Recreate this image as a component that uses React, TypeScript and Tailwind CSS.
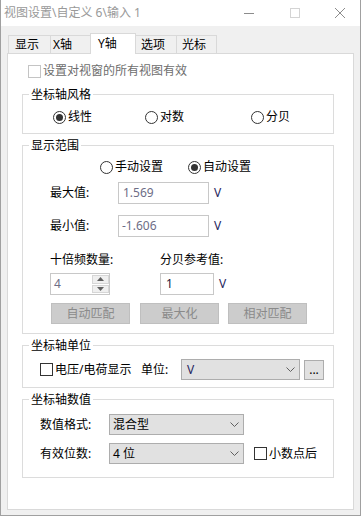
import React from "react";

const tabs = [
  { label: "显示", cls: "w-[42px] pl-[6px] border-l" },
  { label: "X轴", cls: "w-[40px] pl-[2px] border-l" },
  { label: "Y轴", cls: "w-[46px] pl-[7px] border-x", active: true },
  { label: "选项", cls: "w-[40px] pl-[5px]" },
  { label: "光标", cls: "w-[41px] pl-[5px] border-x" },
];

function Radio({ label, checked }: { label: string; checked?: boolean }) {
  return (
    <div className="flex items-center">
      <span className="flex h-[13px] w-[13px] items-center justify-center rounded-full border border-[#333333] bg-white">
        {checked && <span className="h-[7px] w-[7px] rounded-full bg-[#333333]" />}
      </span>
      <span className="ml-[2px] leading-[14px]">{label}</span>
    </div>
  );
}

function Checkbox({ label, disabled }: { label: string; disabled?: boolean }) {
  return (
    <div className="flex items-center">
      <span
        className={
          disabled
            ? "h-[13px] w-[13px] border border-[#c4c4c4] bg-white"
            : "h-[13px] w-[13px] border border-[#333333] bg-white"
        }
      />
      <span className={disabled ? "ml-[2px] leading-[14px] text-[#6d6d6d]" : "ml-[2px] leading-[14px]"}>
        {label}
      </span>
    </div>
  );
}

function GroupBox({ title, className, children }: { title: string; className?: string; children: React.ReactNode }) {
  return (
    <fieldset className={"ml-[14px] w-[312px] border border-[#dcdcdc] " + (className ?? "")}>
      <legend className="ml-[6px] px-[2px] leading-[13px]">{title}</legend>
      {children}
    </fieldset>
  );
}

function Chevron() {
  return (
    <svg width="9" height="5" viewBox="0 0 9 5" className="shrink-0">
      <path d="M0.5 0.5 L4.5 4.5 L8.5 0.5" fill="none" stroke="#606060" strokeWidth="1" />
    </svg>
  );
}

function Select({ value, className, valueClass }: { value: string; className: string; valueClass?: string }) {
  return (
    <div
      className={
        "flex h-[21px] items-center justify-between border border-[#adadad] bg-[#e1e1e1] pl-[3px] pr-[4px] " +
        className
      }
    >
      <span className={"leading-[14px] " + (valueClass ?? "")}>{value}</span>
      <Chevron />
    </div>
  );
}

function Button({ label, className }: { label: string; className?: string }) {
  return (
    <div
      className={
        "flex h-[21px] w-[79px] items-center justify-center border border-[#bfbfbf] bg-[#cccccc] text-[#8a8a8a] " +
        (className ?? "")
      }
    >
      {label}
    </div>
  );
}

function Arrow({ up }: { up?: boolean }) {
  return (
    <svg width="7" height="4" viewBox="0 0 7 4">
      <path d={up ? "M0 4 L3.5 0 L7 4 Z" : "M0 0 L3.5 4 L7 0 Z"} fill="#606060" />
    </svg>
  );
}

export default function App() {
  return (
    <div className="flex h-[516px] w-[361px] flex-col border-x border-b border-[#a0a0a0] bg-white font-['Noto_Sans','Noto_Sans_CJK_SC',sans-serif] text-[12px] text-black">
      {/* title bar */}
      <div className="flex h-[26px] shrink-0 items-center bg-white pl-[3px] pr-[15px]">
        <span className="leading-[14px] text-[#999999]">视图设置\自定义 6\输入 1</span>
        <div className="ml-auto flex items-center">
          <svg width="10" height="10" viewBox="0 0 10 10">
            <path d="M0 5.5 H10" stroke="#8c8c8c" strokeWidth="1" />
          </svg>
          <svg width="10" height="10" viewBox="0 0 10 10" className="ml-[36px]">
            <rect x="0.5" y="0.5" width="9" height="9" fill="none" stroke="#d4d4d4" strokeWidth="1" />
          </svg>
          <svg width="10" height="10" viewBox="0 0 10 10" className="ml-[35px]">
            <path d="M0 0 L10 10 M10 0 L0 10" stroke="#8c8c8c" strokeWidth="1" />
          </svg>
        </div>
      </div>

      {/* body */}
      <div className="flex flex-1 flex-col bg-[#f0f0f0] pt-[7px]">
        <div className="relative z-10 ml-[7px] flex h-[21px] items-end">
          {tabs.map((t) =>
            t.active ? (
              <div
                key={t.label}
                className={"h-[21px] border-t border-[#d9d9d9] bg-white pt-[3px] leading-[14px] " + t.cls}
              >
                {t.label}
              </div>
            ) : (
              <div
                key={t.label}
                className={"mb-px h-[18px] border-t border-[#d9d9d9] bg-[#f0f0f0] pt-[2px] leading-[14px] " + t.cls}
              >
                {t.label}
              </div>
            )
          )}
        </div>

        <div className="-mt-px ml-[6px] h-[457px] w-[347px] border border-[#d9d9d9] bg-white">
          <div className="flex h-[14px] items-center pl-[20px] mt-[10px]">
            <Checkbox disabled label="设置对视窗的所有视图有效" />
          </div>

          <GroupBox title="坐标轴风格" className="mt-[10px]">
            <div className="flex h-[32px] items-center pl-[30px]">
              <div className="w-[92px]">
                <Radio checked label="线性" />
              </div>
              <div className="w-[106px]">
                <Radio label="对数" />
              </div>
              <Radio label="分贝" />
            </div>
          </GroupBox>

          <GroupBox title="显示范围" className="mt-[5px]">
            <div className="pb-[9px] pt-[8px]">
              <div className="flex h-[14px] items-center pl-[77px]">
                <div className="w-[88px]">
                  <Radio label="手动设置" />
                </div>
                <Radio checked label="自动设置" />
              </div>

              <div className="mt-[8px] flex h-[22px] items-center pl-[27px]">
                <span className="w-[68px] leading-[14px]">最大值:</span>
                <div className="flex h-[22px] w-[91px] items-center border border-[#c8c8c8] pl-[4px] text-[#6d6d86]">
                  1.569
                </div>
                <span className="ml-[5px] text-[#262660]">V</span>
              </div>

              <div className="mt-[11px] flex h-[22px] items-center pl-[27px]">
                <span className="w-[68px] leading-[14px]">最小值:</span>
                <div className="flex h-[22px] w-[91px] items-center border border-[#c8c8c8] pl-[3px] text-[#6d6d86]">
                  -1.606
                </div>
                <span className="ml-[5px] text-[#262660]">V</span>
              </div>

              <div className="mt-[16px] flex h-[14px] items-center pl-[27px]">
                <span className="w-[110px] leading-[14px]">十倍频数量:</span>
                <span className="leading-[14px]">分贝参考值:</span>
              </div>

              <div className="mt-[6px] flex h-[22px] items-center pl-[27px]">
                <div className="flex h-[22px] w-[60px] items-center justify-between border border-[#c8c8c8] pl-[3px]">
                  <span className="text-[#6d6d86]">4</span>
                  <div className="flex h-[20px] w-[17px] flex-col gap-[1px] py-[1px]">
                    <div className="flex flex-1 items-center justify-center border border-[#d6d6d6] bg-[#efefef]">
                      <Arrow up />
                    </div>
                    <div className="flex flex-1 items-center justify-center border border-[#d6d6d6] bg-[#efefef]">
                      <Arrow />
                    </div>
                  </div>
                </div>
                <div className="ml-[50px] flex h-[22px] w-[54px] items-center border border-[#c8c8c8] pl-[5px] text-[#1a1a3a]">
                  1
                </div>
                <span className="ml-[5px] text-[#262660]">V</span>
              </div>

              <div className="mt-[8px] flex items-center pl-[28px]">
                <Button label="自动匹配" />
                <Button label="最大化" className="ml-[10px]" />
                <Button label="相对匹配" className="ml-[9px]" />
              </div>
            </div>
          </GroupBox>

          <GroupBox title="坐标轴单位" className="mt-[5px]">
            <div className="flex h-[35px] items-center pl-[17px]">
              <div className="w-[101px]">
                <Checkbox label="电压/电荷显示" />
              </div>
              <span className="w-[40px] leading-[14px]">单位:</span>
              <Select value="V" className="w-[119px]" valueClass="pl-[2px] text-[#262660]" />
              <div className="ml-[4px] flex h-[20px] w-[20px] items-center justify-center border border-[#adadad] bg-[#e1e1e1] leading-[14px]">
                ...
              </div>
            </div>
          </GroupBox>

          <GroupBox title="坐标轴数值" className="mt-[5px]">
            <div className="pb-[13px] pt-[8px]">
              <div className="flex h-[21px] items-center pl-[17px]">
                <span className="w-[69px] leading-[14px]">数值格式:</span>
                <Select value="混合型" className="w-[135px]" />
              </div>
              <div className="mt-[8px] flex h-[21px] items-center pl-[17px]">
                <span className="w-[69px] leading-[14px]">有效位数:</span>
                <Select value="4 位" className="w-[135px]" />
                <div className="ml-[10px]">
                  <Checkbox label="小数点后" />
                </div>
              </div>
            </div>
          </GroupBox>
        </div>
      </div>
    </div>
  );
}
